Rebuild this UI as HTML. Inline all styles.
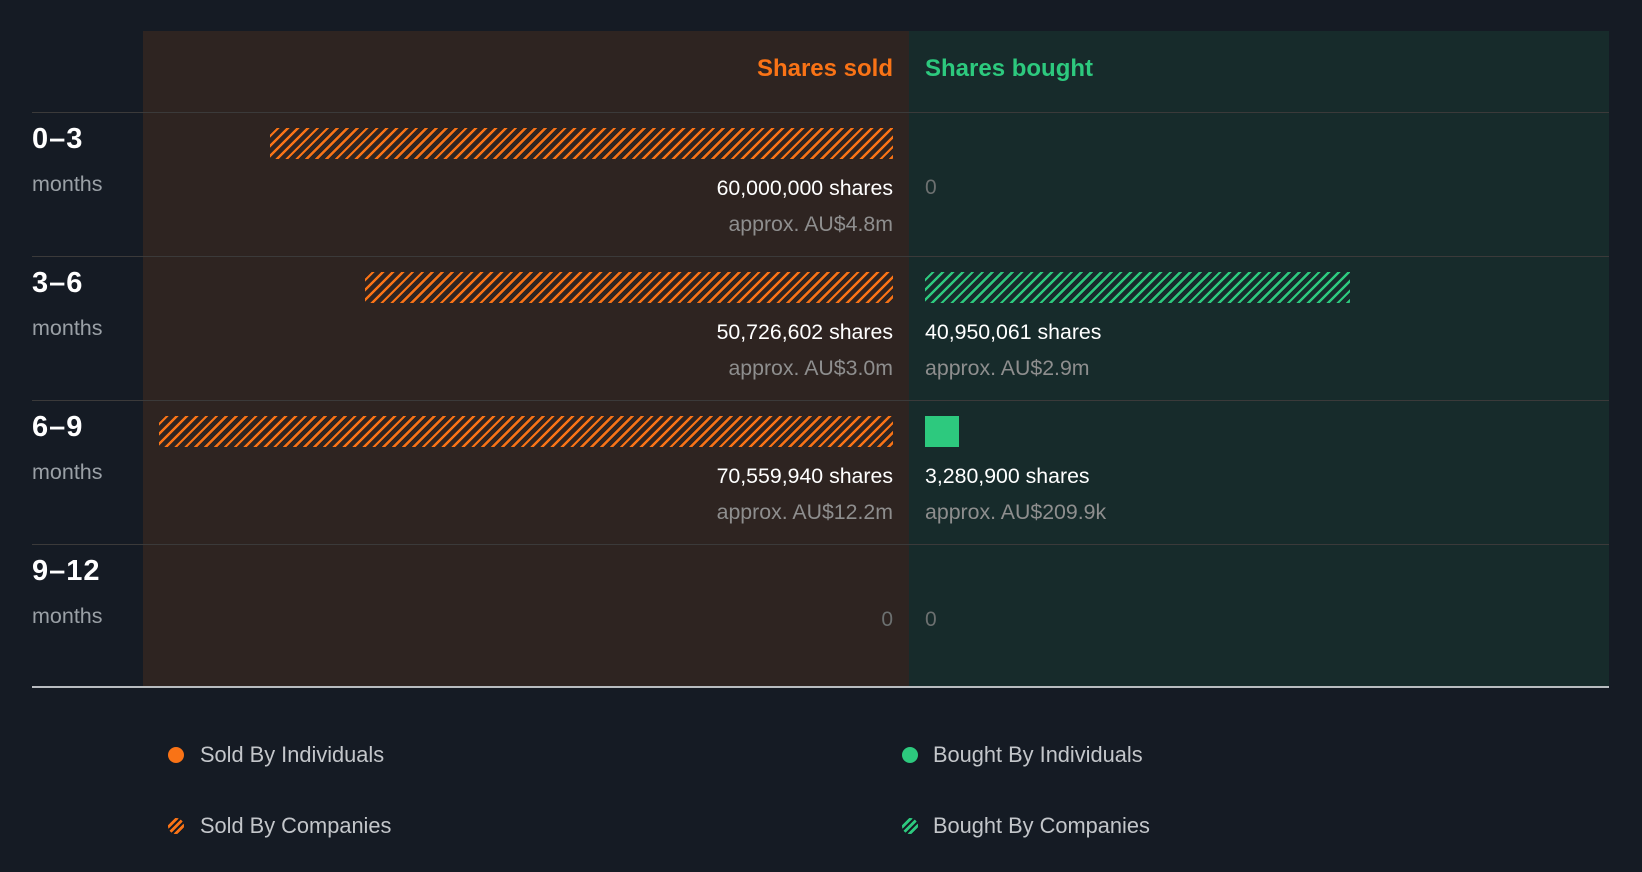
<!DOCTYPE html>
<html><head><meta charset="utf-8"><style>
*{margin:0;padding:0;box-sizing:border-box}
body{width:1642px;height:872px;background:#151b24;font-family:"Liberation Sans",Roboto,sans-serif;position:relative;overflow:hidden}
.a{position:absolute}
.sold{background:#2e2421}
.bought{background:#172b2b}
.hl{height:1px;background:#3b3a3a}
.hs{background:repeating-linear-gradient(135deg,#2e2421 0 4.6px,#f97316 4.6px 7px)}
.hb{background:repeating-linear-gradient(135deg,#172b2b 0 4.6px,#2dc97e 4.6px 7px)}
.lab{left:32px;color:#fff;font-weight:bold;font-size:29px;letter-spacing:1px}
.mo{left:32px;color:#9aa0a6;font-size:21.5px}
.sh{color:#fff;font-size:21.3px}
.ap{color:#8e8e8e;font-size:21.3px}
.r{text-align:right;right:749px}
.l{left:925px}
.z{color:#6c7070;font-size:21px}
.leg{color:#c3c6ca;font-size:21.8px}
.dot{width:16px;height:16px;border-radius:50%}
</style></head><body>
<div class="a sold" style="left:143px;top:31px;width:766px;height:656px"></div>
<div class="a bought" style="left:909px;top:31px;width:700px;height:656px"></div>
<div class="a" style="right:749px;top:55px;color:#f97316;font-weight:bold;font-size:24px">Shares sold</div>
<div class="a" style="left:925px;top:55px;color:#2dc97e;font-weight:bold;font-size:24px">Shares bought</div>
<div class="a hl" style="left:32px;top:112px;width:1577px"></div>
<div class="a hl" style="left:32px;top:256px;width:1577px"></div>
<div class="a hl" style="left:32px;top:400px;width:1577px"></div>
<div class="a hl" style="left:32px;top:544px;width:1577px"></div>
<div class="a" style="left:32px;top:686px;width:1577px;height:2px;background:#b8bcc0"></div>

<div class="a lab" style="top:123px">0–3</div><div class="a mo" style="top:172px">months</div>
<div class="a lab" style="top:267px">3–6</div><div class="a mo" style="top:316px">months</div>
<div class="a lab" style="top:411px">6–9</div><div class="a mo" style="top:460px">months</div>
<div class="a lab" style="top:555px">9–12</div><div class="a mo" style="top:604px">months</div>

<div class="a hs" style="left:270px;top:128px;width:623px;height:31px"></div>
<div class="a sh r" style="top:176px">60,000,000 shares</div>
<div class="a ap r" style="top:212px">approx. AU$4.8m</div>
<div class="a z l" style="top:176px">0</div>

<div class="a hs" style="left:365px;top:272px;width:528px;height:31px"></div>
<div class="a sh r" style="top:320px">50,726,602 shares</div>
<div class="a ap r" style="top:356px">approx. AU$3.0m</div>
<div class="a hb" style="left:925px;top:272px;width:425px;height:31px"></div>
<div class="a sh l" style="top:320px">40,950,061 shares</div>
<div class="a ap l" style="top:356px">approx. AU$2.9m</div>

<div class="a hs" style="left:159px;top:416px;width:734px;height:31px"></div>
<div class="a sh r" style="top:464px">70,559,940 shares</div>
<div class="a ap r" style="top:500px">approx. AU$12.2m</div>
<div class="a" style="left:925px;top:416px;width:34px;height:31px;background:#2dc97e"></div>
<div class="a sh l" style="top:464px">3,280,900 shares</div>
<div class="a ap l" style="top:500px">approx. AU$209.9k</div>

<div class="a z r" style="top:608px">0</div>
<div class="a z l" style="top:608px">0</div>

<div class="a dot" style="left:168px;top:747px;background:#f97316"></div>
<div class="a leg" style="left:200px;top:742px">Sold By Individuals</div>
<div class="a dot" style="left:168px;top:818px;background:repeating-linear-gradient(135deg,#f97316 0 3px,#151b24 3px 5px)"></div>
<div class="a leg" style="left:200px;top:813px">Sold By Companies</div>
<div class="a dot" style="left:902px;top:747px;background:#2dc97e"></div>
<div class="a leg" style="left:933px;top:742px">Bought By Individuals</div>
<div class="a dot" style="left:902px;top:818px;background:repeating-linear-gradient(135deg,#2dc97e 0 3px,#151b24 3px 5px)"></div>
<div class="a leg" style="left:933px;top:813px">Bought By Companies</div>
</body></html>
